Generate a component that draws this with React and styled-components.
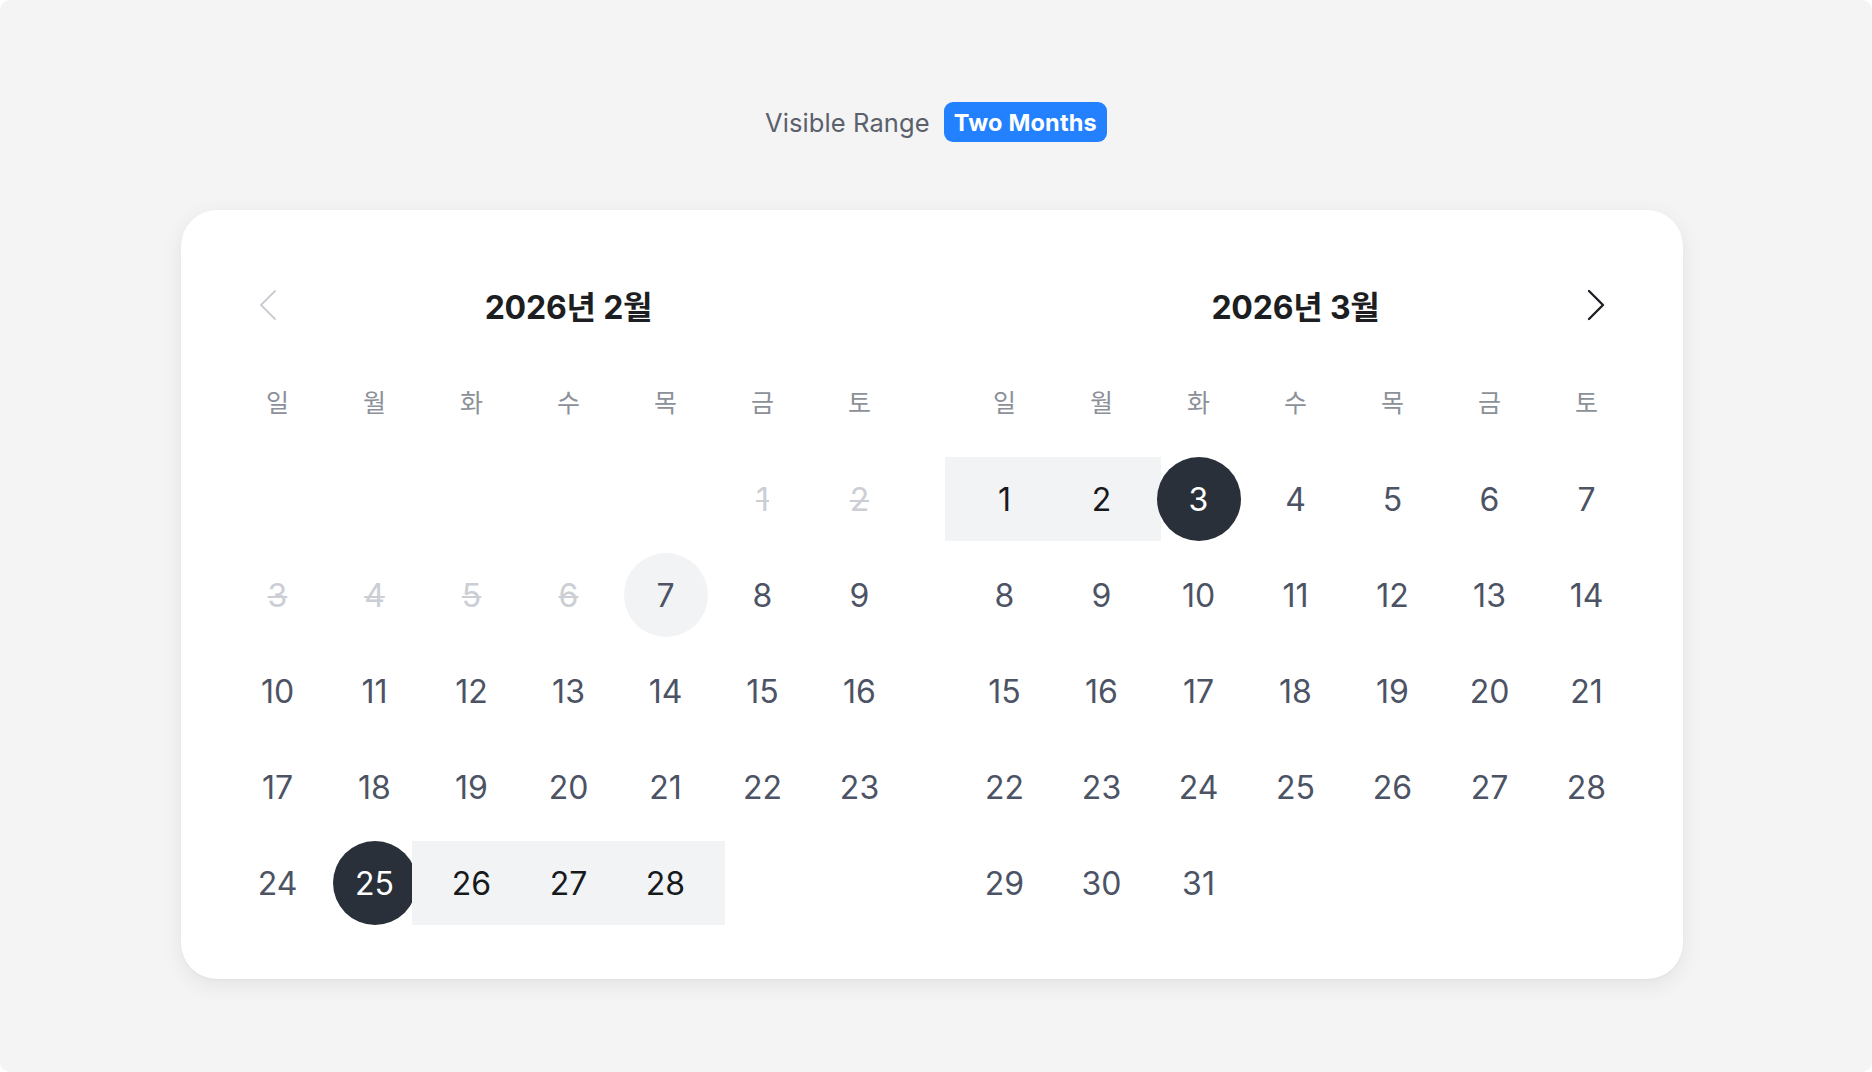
import React from 'react';
import styled, { createGlobalStyle } from 'styled-components';

const GlobalStyle = createGlobalStyle`
  html, body {
    margin: 0;
    padding: 0;
    background: #ffffff;
  }
  body {
    font-family: Inter, "Noto Sans CJK KR", "Noto Sans", sans-serif;
    -webkit-font-smoothing: antialiased;
  }
`;

const Page = styled.div`
  height: 1072px;
  box-sizing: border-box;
  background: #f4f4f4;
  border-radius: 10px;
  padding-top: 102px;
  display: flex;
  flex-direction: column;
  align-items: center;
`;

const Toolbar = styled.div`
  display: flex;
  align-items: center;
  gap: 14px;
  height: 40px;
`;

const ToolbarLabel = styled.span`
  font-size: 25.5px;
  color: #5a606c;
  letter-spacing: 0.1px;
`;

const Badge = styled.span`
  display: inline-flex;
  align-items: center;
  height: 40px;
  padding: 0 10px;
  border-radius: 9px;
  background: #2381ff;
  color: #ffffff;
  font-size: 23.5px;
  font-weight: 700;
  letter-spacing: 0.2px;
`;

const Card = styled.div`
  margin-top: 68px;
  margin-right: 8px;
  display: flex;
  gap: 48px;
  padding: 71px 48px 48px;
  background: #ffffff;
  border-radius: 36px;
  box-shadow: 0 6px 22px rgba(0, 0, 0, 0.07), 0 1px 3px rgba(0, 0, 0, 0.03);
`;

const Month = styled.div`
  width: 679px;
`;

const MonthHeader = styled.div`
  display: grid;
  grid-template-columns: 63px 1fr 63px;
  align-items: center;
  height: 48px;
  margin-bottom: 48px;
`;

const NavButton = styled.button`
  width: 48px;
  height: 48px;
  padding: 0;
  border: none;
  background: none;
  display: flex;
  align-items: center;
  justify-content: center;
  color: ${({ $disabled }) => ($disabled ? '#c9ccd2' : '#1d2026')};
  justify-self: ${({ $side }) => ($side === 'left' ? 'end' : 'start')};
  cursor: ${({ $disabled }) => ($disabled ? 'default' : 'pointer')};
`;

const MonthTitle = styled.h2`
  margin: 0;
  text-align: center;
  font-size: 32px;
  font-weight: 700;
  color: #1c1e22;
  letter-spacing: -0.2px;
`;

const DayGrid = styled.div`
  display: grid;
  grid-template-columns: repeat(7, 97px);
`;

const Weekday = styled.div`
  height: 48px;
  display: flex;
  align-items: center;
  justify-content: center;
  font-size: 25px;
  color: #8c9098;
  margin-bottom: 26px;
`;

const DayCell = styled.div`
  position: relative;
  height: 96px;
  display: flex;
  align-items: center;
  justify-content: center;

  ${({ $inRange }) =>
    $inRange &&
    `
    &::before {
      content: '';
      position: absolute;
      top: 6px;
      bottom: 6px;
      left: -11px;
      right: -11px;
      background: #f2f3f5;
    }
  `}
`;

const dayColors = {
  normal: '#4c5364',
  range: '#17191d',
  disabled: '#cbced4',
  selected: '#ffffff',
  today: '#4c5364',
};

const DayMark = styled.span`
  position: relative;
  width: 84px;
  height: 84px;
  border-radius: 50%;
  display: flex;
  align-items: center;
  justify-content: center;
  font-size: 32px;
  color: ${({ $kind }) => dayColors[$kind]};
  background: ${({ $kind }) =>
    $kind === 'selected' ? '#2a3039' : $kind === 'today' ? '#f2f3f5' : 'transparent'};
  text-decoration: ${({ $kind }) => ($kind === 'disabled' ? 'line-through' : 'none')};
  text-decoration-thickness: 2px;
`;

const WEEKDAYS = ['일', '월', '화', '수', '목', '금', '토'];

const Chevron = ({ dir }) => (
  <svg width="20" height="32" viewBox="0 0 20 32" fill="none">
    <path
      d={dir === 'left' ? 'M17 2 L3 16 L17 30' : 'M3 2 L17 16 L3 30'}
      stroke="currentColor"
      strokeWidth={dir === 'left' ? 1.8 : 2.4}
      strokeLinecap="round"
      strokeLinejoin="round"
    />
  </svg>
);

const months = [
  {
    title: '2026년 2월',
    offset: 5,
    days: 28,
    nav: 'left',
    kind: (d) => {
      if (d <= 6) return 'disabled';
      if (d === 7) return 'today';
      if (d === 25) return 'selected';
      if (d > 25) return 'range';
      return 'normal';
    },
    inRange: (d) => d > 25,
  },
  {
    title: '2026년 3월',
    offset: 0,
    days: 31,
    nav: 'right',
    kind: (d) => {
      if (d === 3) return 'selected';
      if (d < 3) return 'range';
      return 'normal';
    },
    inRange: (d) => d < 3,
  },
];

const MonthView = ({ month }) => {
  const cells = [];
  for (let i = 0; i < month.offset; i++) {
    cells.push(<DayCell key={`e${i}`} />);
  }
  for (let d = 1; d <= month.days; d++) {
    cells.push(
      <DayCell key={d} $inRange={month.inRange(d)}>
        <DayMark $kind={month.kind(d)}>{d}</DayMark>
      </DayCell>
    );
  }

  return (
    <Month>
      <MonthHeader>
        {month.nav === 'left' ? (
          <NavButton $side="left" $disabled>
            <Chevron dir="left" />
          </NavButton>
        ) : (
          <span />
        )}
        <MonthTitle>{month.title}</MonthTitle>
        {month.nav === 'right' ? (
          <NavButton $side="right">
            <Chevron dir="right" />
          </NavButton>
        ) : (
          <span />
        )}
      </MonthHeader>
      <DayGrid>
        {WEEKDAYS.map((w) => (
          <Weekday key={w}>{w}</Weekday>
        ))}
        {cells}
      </DayGrid>
    </Month>
  );
};

export default function App() {
  return (
    <>
      <GlobalStyle />
      <Page>
        <Toolbar>
          <ToolbarLabel>Visible Range</ToolbarLabel>
          <Badge>Two Months</Badge>
        </Toolbar>
        <Card>
          {months.map((m) => (
            <MonthView key={m.title} month={m} />
          ))}
        </Card>
      </Page>
    </>
  );
}
